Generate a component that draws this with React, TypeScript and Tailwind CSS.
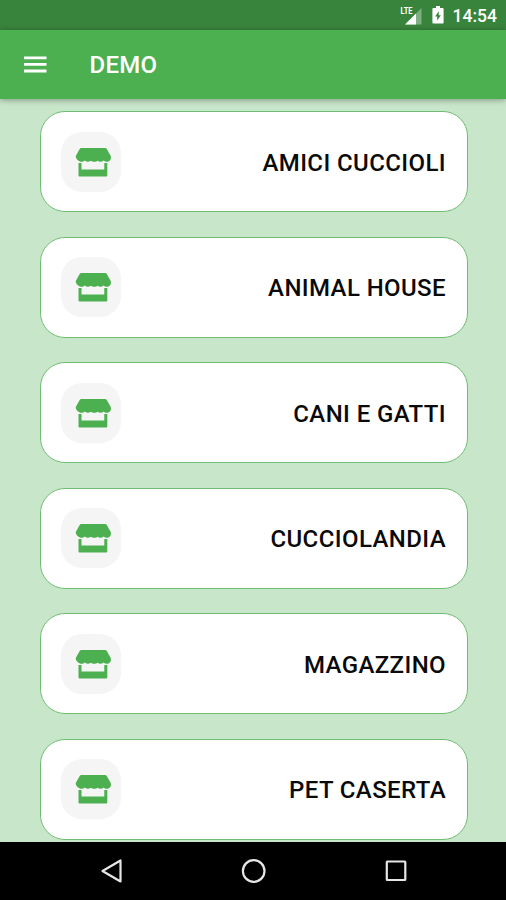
const shops = [
  "AMICI CUCCIOLI",
  "ANIMAL HOUSE",
  "CANI E GATTI",
  "CUCCIOLANDIA",
  "MAGAZZINO",
  "PET CASERTA",
];

function StoreIcon() {
  return (
    <svg viewBox="0 0 36 30" className="h-[30px] w-9" fill="#4caf50">
      <path d="M7 1h22.500c1.200 0 2 .4 2.600 1.400l3.500 6.400c.8 2.200.2 4.200-1.600 5.400-1.700.9-4 .6-5.400-.7-1.800 1.700-4.200 1.700-6 .3-1.600 1.300-5.200 1.300-6.800 0-1.800 1.400-4.200 1.400-6-.3-1.400 1.300-3.700 1.600-5.400.7C2.400 13 .2 11 .9 8.800L4.400 2.400C5 1.400 5.800 1 7 1z" />
      <path d="M3.500 16h3v6.400h22.800V16h3v12.200c0 .8-.5 1.300-1.300 1.300H4.800c-.8 0-1.300-.5-1.300-1.300z" />
    </svg>
  );
}

function StatusBar() {
  return (
    <div className="flex h-[30px] shrink-0 items-center justify-end bg-[#39843c] pr-[9px] text-white">
      <svg viewBox="0 0 22 19" className="mr-[10px] h-[19px] w-[22px]">
        <path d="M21.500 2v16.500H5z" fill="#fff" opacity=".35" />
        <path d="M16 7.500v11H5z" fill="#fff" />
        <text x="0.500" y="8" fontSize="9.500" fontWeight="700" textLength="12" lengthAdjust="spacingAndGlyphs" fill="#fff">
          LTE
        </text>
      </svg>
      <svg viewBox="0 0 12 18" className="mr-[9px] h-[18px] w-3">
        <path d="M4 0h4v2h2.500c.7 0 1.100.4 1.100 1.100v13.300c0 .7-.4 1.100-1.100 1.100h-9c-.7 0-1.100-.4-1.100-1.100V3.100C.4 2.400.8 2 1.500 2H4z" fill="#fff" />
        <path d="M6.800 5.200v4h2.100l-3.700 5.300v-4H3.100z" fill="#39843c" />
      </svg>
      <span className="pt-[3px] text-[17.500px] leading-none font-medium">14:54</span>
    </div>
  );
}

function ShopCard({ name }: { name: string }) {
  return (
    <div className="flex h-[101px] shrink-0 items-center justify-between rounded-[25px] border border-[#6fbd73] bg-white pr-[21px] pl-5">
      <div className="flex size-[60px] items-center justify-center rounded-[21px] bg-[#f5f5f5] pl-1">
        <StoreIcon />
      </div>
      <span className="pt-[2px] text-[24px] leading-none font-medium tracking-[0.400px] text-[#0a0a0a]">
        {name}
      </span>
    </div>
  );
}

export default function App() {
  return (
    <div className="flex h-[900px] w-[506px] flex-col overflow-hidden bg-[#c8e6c9] font-['Roboto',sans-serif]">
      <StatusBar />
      <header className="z-10 flex h-[69px] shrink-0 items-center bg-[#4caf50] pl-[23.500px] text-white shadow-[0_1px_6px_rgba(0,0,0,0.35)]">
        <svg viewBox="0 0 23 17" className="h-[17px] w-[23px]" fill="#fff">
          <path d="M0 .5h22.500v2.800H0zM0 7h22.500v2.800H0zM0 13.600h22.500v2.800H0z" />
        </svg>
        <h1 className="pl-[43px] text-[24px] leading-none font-medium tracking-[0.300px]">DEMO</h1>
      </header>
      <main className="flex min-h-0 grow flex-col gap-[24.500px] overflow-hidden pt-[12px] pr-[38px] pl-10">
        {shops.map((name) => (
          <ShopCard key={name} name={name} />
        ))}
      </main>
      <nav className="flex h-[58px] shrink-0 items-center bg-black pl-[100px]">
        <svg viewBox="0 0 24 26" className="h-[26px] w-6" fill="none" stroke="#e6e6e6" strokeWidth="2.200">
          <path d="M20.500 2.500v21L2.500 13z" strokeLinejoin="round" />
        </svg>
        <svg viewBox="0 0 26 26" className="ml-[117px] size-[26px]" fill="none" stroke="#e6e6e6" strokeWidth="2.200">
          <circle cx="12.700" cy="13" r="10.800" />
        </svg>
        <svg viewBox="0 0 24 24" className="ml-[117px] size-6" fill="none" stroke="#e6e6e6" strokeWidth="2.200">
          <rect x="2.800" y="2.500" width="18.500" height="18.500" rx="0.500" />
        </svg>
      </nav>
    </div>
  );
}
